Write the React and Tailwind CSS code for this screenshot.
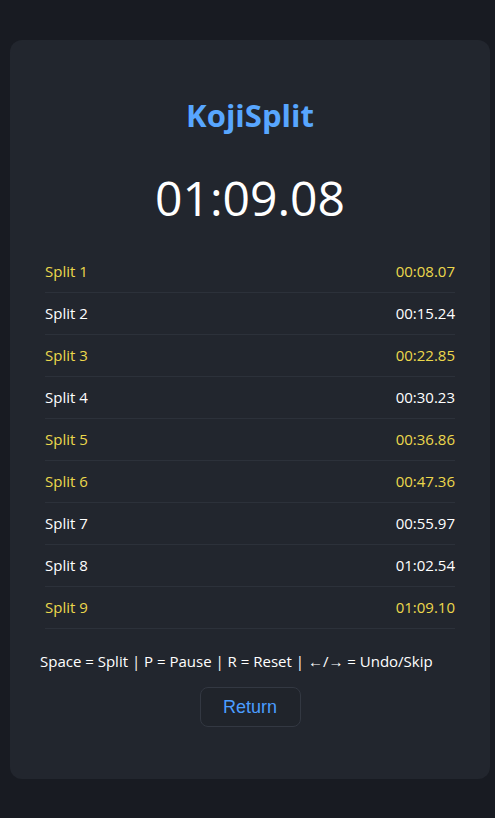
const splits = [
  { name: "Split 1", time: "00:08.07", gold: true },
  { name: "Split 2", time: "00:15.24", gold: false },
  { name: "Split 3", time: "00:22.85", gold: true },
  { name: "Split 4", time: "00:30.23", gold: false },
  { name: "Split 5", time: "00:36.86", gold: true },
  { name: "Split 6", time: "00:47.36", gold: true },
  { name: "Split 7", time: "00:55.97", gold: false },
  { name: "Split 8", time: "01:02.54", gold: false },
  { name: "Split 9", time: "01:09.10", gold: true },
];

export default function App() {
  return (
    <div className="min-h-[818px] bg-[#181b22] pl-[10px] pr-[5px] pt-[40px] font-['Open_Sans',sans-serif]">

      {/* CARD */}
      <div className="bg-[#22262e] rounded-[12px] px-[30px] pt-[52px] pb-[52px] flex flex-col">

        <h1 className="text-center text-[31px] font-bold text-[#58a6ff] leading-[46px]">
          KojiSplit
        </h1>

        <div className="text-center text-[48px] text-white leading-[64px] mt-[28px]">
          01:09.08
        </div>

        <ul className="mx-[5px] mt-[21px]">
          {splits.map(s => (
            <li
              key={s.name}
              className={`flex justify-between items-center h-[42px] border-b border-[#2c313a] text-[15px] ${s.gold ? "text-[#ecd84c]" : "text-white"}`}
            >
              <span>{s.name}</span>
              <span>{s.time}</span>
            </li>
          ))}
        </ul>

        <p className="text-white text-[15px] leading-[22px] mt-[21px] whitespace-nowrap">
          Space = Split | P = Pause | R = Reset | ←/→ = Undo/Skip
        </p>

        <button className="self-center mt-[15px] w-[101px] h-[40px] rounded-[8px] border border-[#333842] bg-[#20242b] text-[#4b9dff] text-[18px] font-['Liberation_Sans',sans-serif]">
          Return
        </button>

      </div>

    </div>
  );
}
